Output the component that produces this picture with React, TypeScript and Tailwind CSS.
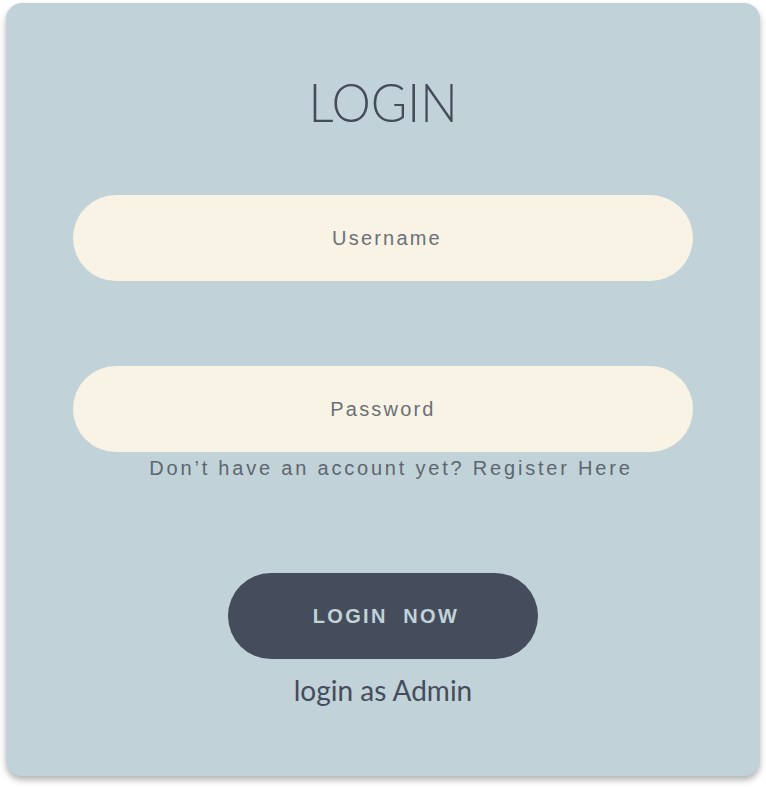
export default function App() {
  return (
    <div className="w-[766px] h-[787px] bg-white pt-[3px] pl-[6px]">
      <div className="w-[754px] h-[773px] rounded-[16px] bg-[#c1d3d8] shadow-[0_4px_6px_rgba(0,0,0,0.3)] flex flex-col items-center">
        <h1 className="mt-[68px] h-[62px] text-[54px] leading-[62px] font-light tracking-[0px] text-[#444c5a] font-['Lato',sans-serif] scale-x-[0.92]">
          LOGIN
        </h1>

        <input
          type="text"
          placeholder="Username"
          className="mt-[62px] w-[620px] h-[86px] pl-[8px] rounded-full bg-[#f9f3e5] text-center text-[20px] tracking-[2.2px] text-[#6b7078] placeholder:text-[#6b7078] font-['Liberation_Sans',sans-serif] outline-none"
        />

        <input
          type="password"
          placeholder="Password"
          className="mt-[85px] w-[620px] h-[86px] rounded-full bg-[#f9f3e5] text-center text-[20px] tracking-[2.2px] text-[#6b7078] placeholder:text-[#6b7078] font-['Liberation_Sans',sans-serif] outline-none"
        />

        <p className="mt-[2px] ml-[16px] text-[20px] leading-[28px] tracking-[2.8px] text-[#5d6670] font-['Liberation_Sans',sans-serif]">
          Don’t have an account yet? Register Here
        </p>

        <button className="mt-[91px] w-[310px] h-[86px] pl-[6px] rounded-full bg-[#454c5b] text-[#c1d3d8] text-[20px] font-bold tracking-[2.3px] font-['Liberation_Sans',sans-serif]">
          LOGIN&nbsp; NOW
        </button>

        <p className="mt-[14px] text-[28px] leading-[34px] text-[#454c5b] font-['Lato',sans-serif]">
          login as Admin
        </p>
      </div>
    </div>
  );
}
